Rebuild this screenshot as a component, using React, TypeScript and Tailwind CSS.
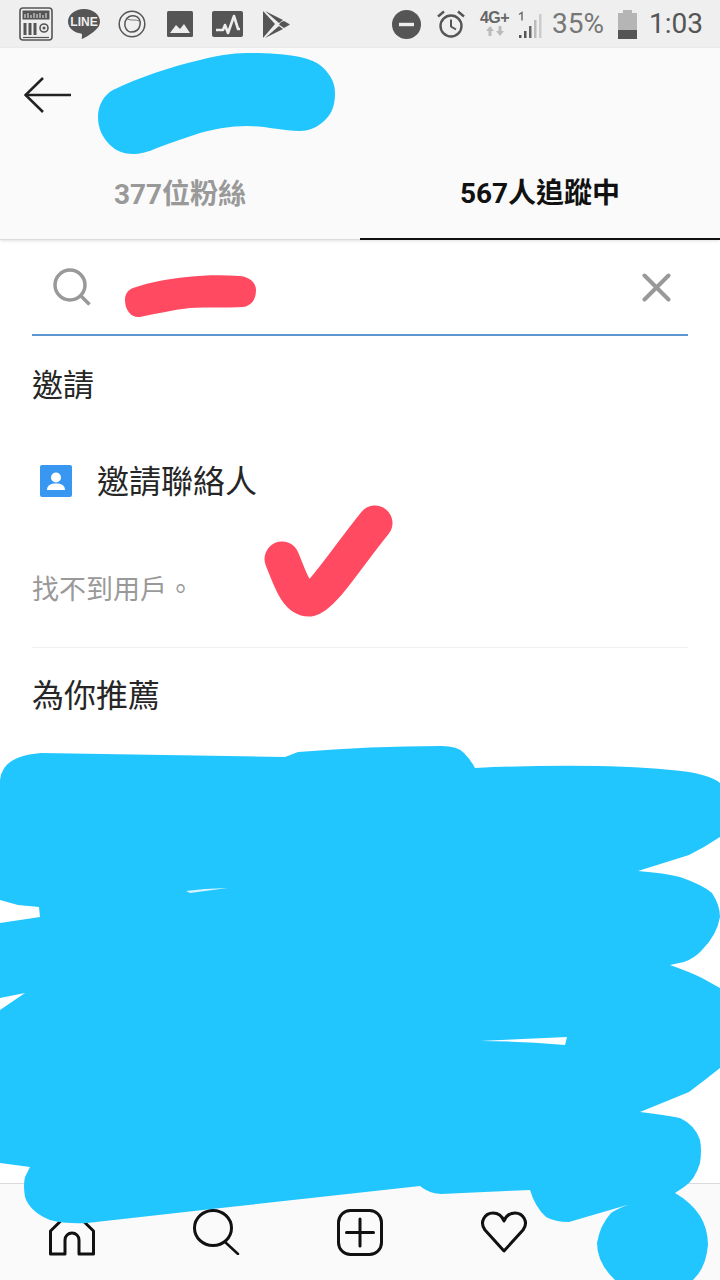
const sans = "font-['Roboto','Noto_Sans_CJK_TC',sans-serif]";

function StatusBar() {
  return (
    <div className="flex h-12 items-center justify-between bg-[#efefef] pl-[19px] pr-[17px] text-[#555]">
      <div className="flex items-center">
        {/* equalizer app */}
        <svg width="34" height="34" viewBox="0 0 34 34" fill="none">
          <rect x="1" y="1" width="32" height="32" rx="3" stroke="#555" strokeWidth="1.6" />
          <rect x="3.5" y="3.5" width="27" height="9" fill="#555" />
          <path d="M6 11V7M9 11V6M12 11V8M15 11V6M18 11V7M21 11V6M24 11V8M27 11V6" stroke="#eee" strokeWidth="1" />
          <path d="M6 16v12M11 16v12M16 16v12" stroke="#555" strokeWidth="3" />
          <circle cx="25" cy="21" r="4" stroke="#555" strokeWidth="1.6" />
          <circle cx="25" cy="21" r="1.5" fill="#555" />
          <path d="M4 30.5h26" stroke="#555" strokeWidth="1.2" />
        </svg>
        {/* LINE */}
        <svg className="ml-[15px]" width="32" height="31" viewBox="0 0 32 31">
          <path d="M16 0C7 0 0 5.600 0 12.500C0 19 5.800 23.600 13 24.600C14.500 25 14 27 13.700 30C17 29 25 24 29 19.500C31 17.500 32 15 32 12.500C32 5.600 25 0 16 0Z" fill="#555" />
          <text x="16" y="17" textAnchor="middle" fontSize="12" fontWeight="700" fill="#eee" fontFamily="Liberation Sans, sans-serif">LINE</text>
        </svg>
        {/* round browser badge */}
        <svg className="ml-[18px]" width="28" height="28" viewBox="0 0 28 28" fill="none">
          <circle cx="14" cy="14" r="12.800" stroke="#555" strokeWidth="1.500" />
          <path d="M7 12C8 7 13 5 17 6C21 7 23 11 22 15C21 20 17 22 13 22C9 22 6 17 7 12Z" stroke="#555" strokeWidth="1.500" />
          <path d="M9 9C13 11 18 9 21 11" stroke="#777" strokeWidth="1" />
        </svg>
        {/* gallery */}
        <svg className="ml-[21px]" width="26" height="26" viewBox="0 0 26 26">
          <rect width="26" height="26" rx="1.500" fill="#555" />
          <path d="M3 22L9 14L13 18L17 13L23 22Z" fill="#eee" />
        </svg>
        {/* activity */}
        <svg className="ml-[19px]" width="31" height="26" viewBox="0 0 31 26" fill="none">
          <rect width="31" height="26" rx="2" fill="#555" />
          <path d="M4 19H11L13 14L16 22L22 5L26 18H28" stroke="#eee" strokeWidth="2.600" strokeLinejoin="round" />
        </svg>
        {/* play store */}
        <svg className="ml-5" width="27" height="27" viewBox="0 0 27 27">
          <path d="M0 0L12 13L0 27Z" fill="#555" />
          <path d="M2 0L20 9L16 12Z" fill="#555" />
          <path d="M2 27L20 18L16 15Z" fill="#555" />
          <path d="M18 11L21 10L27 13.500L21 17L18 15L16 13.500Z" fill="#555" />
        </svg>
      </div>

      <div className="flex items-center">
        {/* do not disturb */}
        <svg width="29" height="29" viewBox="0 0 29 29">
          <circle cx="14.500" cy="14.500" r="14.500" fill="#555" />
          <rect x="7" y="12.800" width="15" height="3.400" fill="#eee" />
        </svg>
        {/* alarm */}
        <svg className="ml-[16px]" width="28" height="28" viewBox="0 0 28 28" fill="none" stroke="#555" strokeWidth="2.400">
          <circle cx="14" cy="16" r="10.500" />
          <path d="M14 9.500V16.500L19 19.500" strokeWidth="2" />
          <path d="M1 6.500L7 1.500M27 6.500L21 1.500" />
        </svg>
        {/* network type */}
        <div className="ml-[14px] flex w-[31px] flex-col items-center">
          <span className="font-['Liberation_Sans',sans-serif] text-[16px] font-bold leading-[14px] tracking-[-0.5px] text-[#666]">4G+</span>
          <svg width="20" height="12" viewBox="0 0 20 12" fill="#bbb">
            <path d="M5 1L9 6H6.500V11H3.500V6H1Z" />
            <path d="M15 11L19 6H16.500V1H13.500V6H11Z" />
          </svg>
        </div>
        {/* signal */}
        <svg className="ml-2" width="24" height="27" viewBox="0 0 24 27">
          <path d="M1 3.500L4 1.500V9.500" fill="none" stroke="#666" strokeWidth="1.400" />
          <rect x="1" y="24" width="2.500" height="3" fill="#555" />
          <rect x="6" y="20" width="2.500" height="7" fill="#555" />
          <rect x="11" y="15" width="2.500" height="12" fill="#666" />
          <rect x="16" y="9" width="2.500" height="18" fill="#bbb" />
          <rect x="21" y="3" width="2.500" height="24" fill="#ccc" />
        </svg>
        <span className={`${sans} ml-[10px] text-[28px] leading-none text-[#777]`}>35%</span>
        {/* battery */}
        <div className="ml-[14px] flex h-[29px] w-[19px] flex-col items-center">
          <div className="h-[3px] w-[9px] bg-[#b5b5b5]" />
          <div className="flex-1 w-full bg-[#b5b5b5]" />
          <div className="h-[9px] w-full bg-[#555]" />
        </div>
        <span className={`${sans} ml-3 text-[28px] leading-none text-[#555]`}>1:03</span>
      </div>
    </div>
  );
}

function Header() {
  return (
    <div className="relative bg-[#fafafa] shadow-[0_1px_3px_rgba(0,0,0,0.12)]">
      <div className="flex h-[94px] items-center pl-6">
        <svg width="48" height="36" viewBox="0 0 48 36" fill="none" stroke="#222" strokeWidth="2.600">
          <path d="M1 18H47" />
          <path d="M19 1L1.500 18L19 35" />
        </svg>
      </div>
      <div className={`${sans} grid h-[98px] grid-cols-2 text-[28px] font-bold leading-none`}>
        <div className="flex items-center justify-center border-b border-[#dbdbdb] pt-2 text-[#999]">377位粉絲</div>
        <div className="flex items-center justify-center border-b-[2.500px] border-[#111] pt-2 text-[#111]">567人追蹤中</div>
      </div>
    </div>
  );
}

function SearchRow() {
  return (
    <div className="mx-8 flex h-[96px] items-center justify-between border-b-2 border-[#5b96d1] pl-[21px] pr-[17px]">
      <svg width="38" height="38" viewBox="0 0 38 38" fill="none" stroke="#999" strokeWidth="3.500">
        <circle cx="17" cy="17" r="15" />
        <path d="M27.500 27.500L36.500 36.500" />
      </svg>
      <svg width="29" height="29" viewBox="0 0 29 29" fill="none" stroke="#999" strokeWidth="4" strokeLinecap="round">
        <path d="M2.500 2.500L26.500 26.500M26.500 2.500L2.500 26.500" />
      </svg>
    </div>
  );
}

function InviteSection() {
  return (
    <div className={`${sans} text-[#262626]`}>
      <div className="flex h-24 items-center px-8 pt-1 text-[31px]">邀請</div>
      <div className="flex h-[98px] items-center pl-10">
        <svg width="32" height="32" viewBox="0 0 32 32">
          <rect width="32" height="32" rx="2" fill="#3897f0" />
          <circle cx="16" cy="12.500" r="5" fill="#fff" />
          <path d="M7 25C7 20 11 18.500 16 18.500C21 18.500 25 20 25 25Z" fill="#fff" />
        </svg>
        <span className="ml-[25px] pt-[2px] text-[32px] leading-none">邀請聯絡人</span>
      </div>
      <div className="mx-8 flex h-[118px] items-center border-b border-[#efefef] pt-1 text-[27px] text-[#999]">找不到用戶。</div>
      <div className="flex h-[94px] items-center px-8 pt-[2px] text-[32px]">為你推薦</div>
    </div>
  );
}

function BottomNav() {
  return (
    <div className="grid h-[97px] grid-cols-5 items-center border-t border-[#dbdbdb] bg-[#fafafa]">
      <div className="flex justify-center">
        <svg width="46" height="48" viewBox="0 0 46 48" fill="none" stroke="#111" strokeWidth="3">
          <path d="M1.500 46V23L23 2L44.500 23V46H30V32A7 7 0 0 0 16 32V46Z" strokeLinejoin="round" />
        </svg>
      </div>
      <div className="flex justify-center">
        <svg width="47" height="46" viewBox="0 0 47 46" fill="none" stroke="#111" strokeWidth="3">
          <ellipse cx="20" cy="19" rx="18.500" ry="17.500" />
          <path d="M32 33L45 45" strokeWidth="2.500" strokeLinecap="round" />
        </svg>
      </div>
      <div className="flex justify-center">
        <svg width="46" height="47" viewBox="0 0 46 47" fill="none" stroke="#111" strokeWidth="3">
          <rect x="1.500" y="1.500" width="43" height="44" rx="12" />
          <path d="M23 10V37M9.500 23.500H36.500" strokeLinecap="round" />
        </svg>
      </div>
      <div className="flex justify-center">
        <svg width="48" height="42" viewBox="0 0 48 42" fill="none" stroke="#111" strokeWidth="3">
          <path d="M24 40L5 19C-1 11 5 2 13 2C18 2 22 5 24 10C26 5 30 2 35 2C43 2 49 11 43 19Z" strokeLinejoin="round" />
        </svg>
      </div>
      <div />
    </div>
  );
}

// finger-painted marker strokes drawn on top of the whole page
function Scribbles() {
  return (
    <svg className="absolute inset-0 blur-[0.6px]" width="720" height="1280" viewBox="0 0 720 1280">
      <path
        fill="#22c6ff"
        d="M98 117C98 105 104 95 113 90C140 77 170 67 200 60C215 56 232 53 247 53C265 53 285 54 300 57C314 60 322 65 327 72C333 79 335 86 335 93C335 107 331 115 323 122C316 128 308 131 300 131C282 131 265 126 247 126C230 126 215 129 200 133C185 138 170 143 157 148C148 152 140 154 133 154C124 154 116 151 110 145C102 137 98 128 98 117Z"
      />
      <path
        fill="#ff4a62"
        d="M125 300C125 294 128 290 133 288C150 282 168 279 187 277C205 275 222 275 240 276C250 277 256 283 256 290C256 300 251 306 243 307C225 308 207 307 190 308C172 310 155 314 140 317C131 318 125 310 125 300Z"
      />
      <path
        fill="none"
        stroke="#ff4a62"
        strokeWidth="35"
        strokeLinecap="round"
        strokeLinejoin="round"
        d="M282 559C290 578 296 600 310 599C323 596 345 560 375 523"
      />
      <path
        fill="#22c6ff"
        fillRule="evenodd"
        d="M0 780Q2 756 41 753L285 757L298 752Q370 746 441 746Q458 746 464 753Q471 760 475 768Q540 765 597 766Q650 767 689 772Q712 776 720 783L720 837Q705 847 689 855L638 871Q665 873 680 877Q703 885 712 893Q720 905 720 917Q717 935 702 950Q695 958 684 962L670 965Q690 972 702 978L720 988L720 1068Q705 1080 689 1092L640 1112Q665 1115 680 1118Q695 1125 700 1140Q702 1150 700 1163Q695 1180 684 1187L675 1193Q708 1212 708 1245Q706 1268 693 1280L615 1280Q597 1263 597 1243Q600 1225 611 1213Q622 1206 634 1203L569 1222Q555 1222 546 1217Q535 1207 530 1190L441 1194Q428 1193 420 1186L230 1207L87 1223Q65 1224 50 1220Q30 1212 25 1197Q23 1185 25 1177L30 1167L0 1163L0 1010L25 993L0 998L0 923L40 917L39 907L18 905L0 900Z M480 1041L567 1037L565 1045Q520 1041 480 1041Z"
      />
      <path d="M186 891L205 889L228 888L205 891L190 893Z" fill="#d8f4ff" />
    </svg>
  );
}

export default function App() {
  return (
    <div className="relative flex h-[1280px] w-[720px] flex-col overflow-hidden bg-white">
      <StatusBar />
      <Header />
      <SearchRow />
      <InviteSection />
      <div className="flex-1" />
      <BottomNav />
      <Scribbles />
    </div>
  );
}
